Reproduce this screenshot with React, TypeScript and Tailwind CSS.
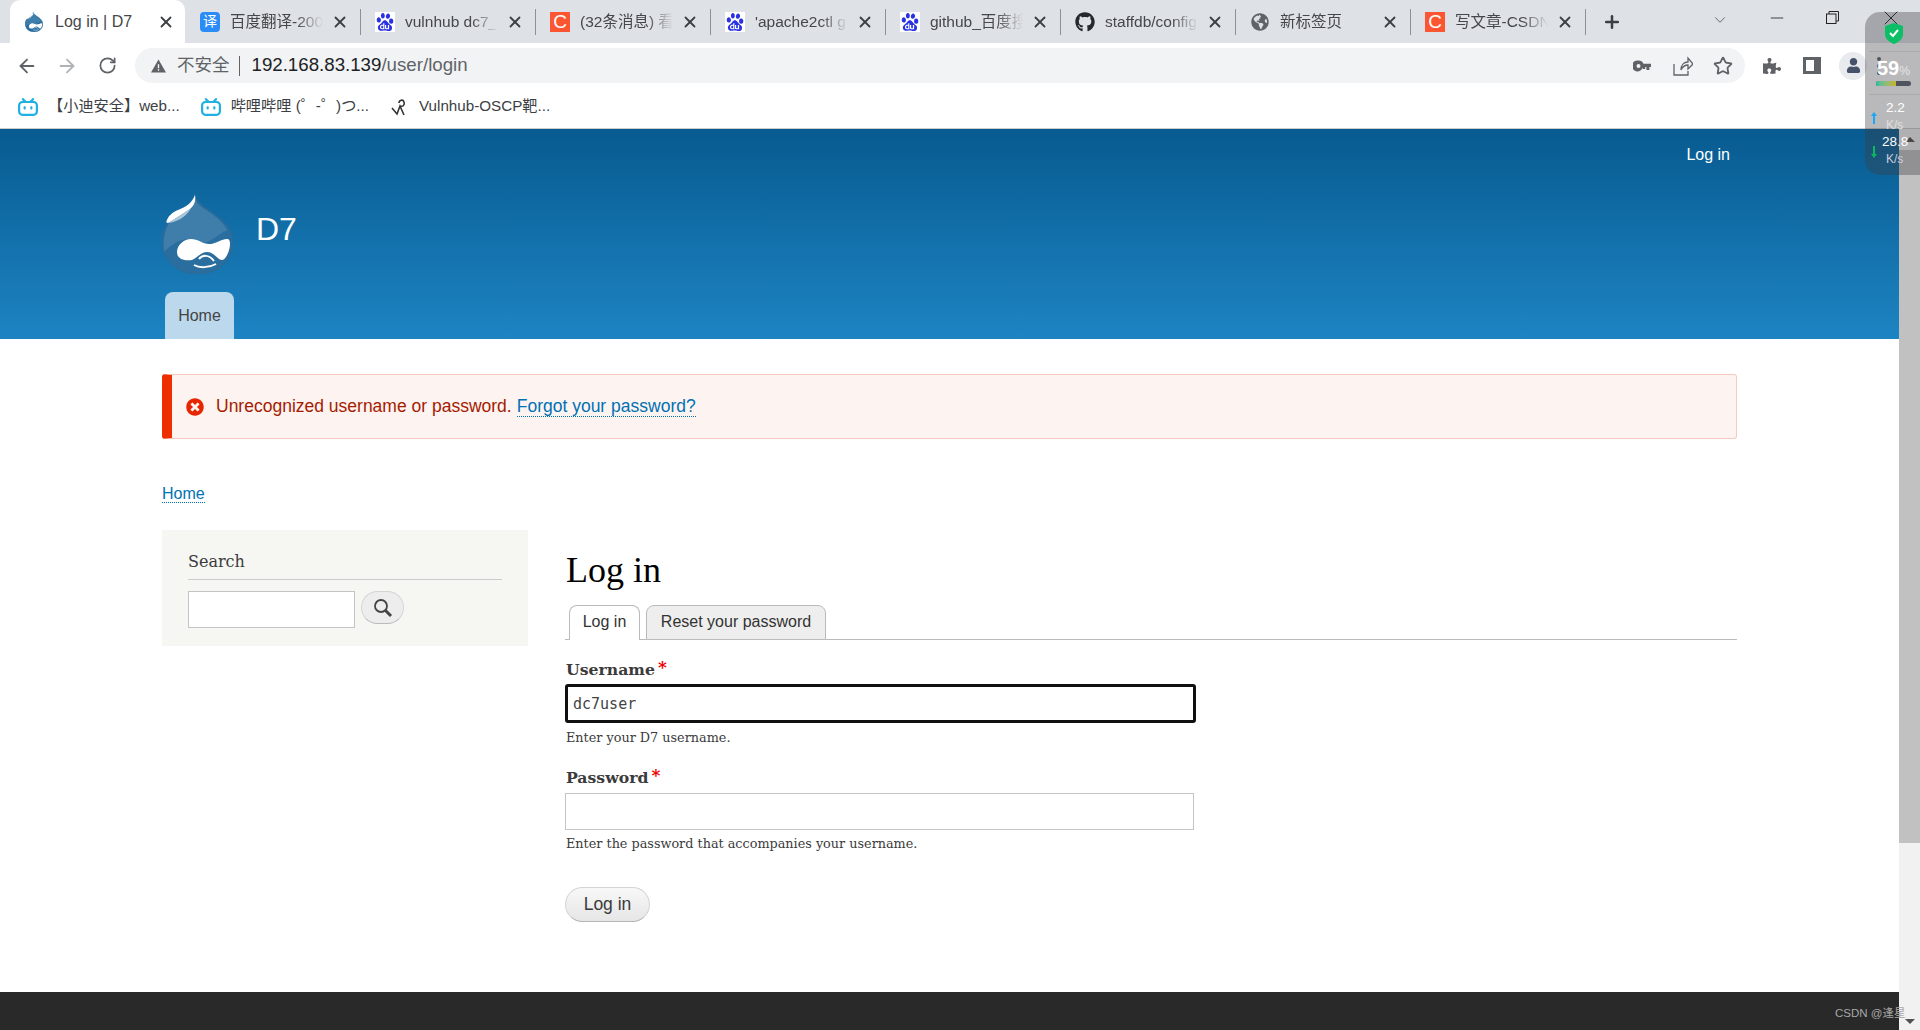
import React from 'react';
import { ArrowLeft, ArrowRight, RotateCw, Star, X, Plus, ChevronDown, Minus } from 'lucide-react';
import { FaGithub, FaGlobeAmericas, FaPuzzlePiece, FaUser, FaTimesCircle } from 'react-icons/fa';
import { SiBaidu, SiBilibili } from 'react-icons/si';

const sans = 'font-["Liberation_Sans","Noto_Sans_CJK_SC",sans-serif]';

const BaiduIcon = () => (
  <span className="flex h-5 w-5 items-center justify-center bg-white text-[#2932e1]">
    <SiBaidu className="h-[18px] w-[18px]" />
  </span>
);

const CsdnIcon = () => (
  <span className="flex h-5 w-5 items-center justify-center bg-[#fc5531] text-[19px] leading-none text-white">C</span>
);

const DrupalDrop = ({ className }: { className: string }) => (
  <svg className={className} viewBox="0 0 71 80">
    <path d="M33 0c1 7 6 11 13 16 13 8 25 17 25 33 0 17-15 31-35 31C15 80 0 66 0 47 0 31 11 22 21 16 27 12 32 8 33 0z" fill="#2a6e9f" stroke="#2d6a94" />
    <path d="M33 3c1 6 5 9 11 13 9 6 17 12 21 20-7 3-12 9-20 12-7 2-11-4-20-3-10 1-18 8-23 13C0 31 11 22 21 16 27 12 32 8 33 3z" fill="#3f7dab" />
    <path d="M33 1c1 7-1 12-8 16-6 4-12 8-19 12-2 0-2-2-1-3 2-5 6-8 11-10 8-3 14-7 17-15z" fill="#fff" />
    <path d="M6 29c7-4 13-8 19-12 2-1 3-2 4-3-3 6-9 11-15 13-3 1-6 2-8 2z" fill="#a9c6da" />
    <path d="M15 58c0-7 7-13 14-13 7 0 12 5 18 5 7 0 14-6 19-5 3 1 2 8 1 11-1 4-4 10-7 10-4 0-8-8-15-8-6 0-10 6-15 8-6 1-15 0-15-8z" fill="#fff" />
    <path d="M37 65c3-4 10-5 15 2M32 71c5 3 15 3 22-1" fill="none" stroke="#fff" strokeWidth="2" />
  </svg>
);

const tabs = [
  { title: '百度翻译-200', icon: <span className="flex h-5 w-5 items-center justify-center rounded-sm bg-[#2b8cf7] text-[14px] text-white">译</span> },
  { title: 'vulnhub dc7_', icon: <BaiduIcon />, sep: true },
  { title: '(32条消息) 看', icon: <CsdnIcon />, sep: true },
  { title: "'apache2ctl g", icon: <BaiduIcon />, sep: true },
  { title: 'github_百度搜', icon: <BaiduIcon />, sep: true },
  { title: 'staffdb/config', icon: <FaGithub className="h-5 w-5 text-[#24292f]" />, sep: true },
  { title: '新标签页', icon: <FaGlobeAmericas className="h-[18px] w-[18px] text-[#5f6368]" />, sep: true },
  { title: '写文章-CSDN', icon: <CsdnIcon />, sep: true },
];

const BrowserChrome = () => (
  <div className={sans}>
    <div className="flex h-[43px] items-end bg-[#dee1e6] pl-[10px]">
      <div className="flex h-[43px] w-[175px] items-center rounded-t-[10px] bg-white pl-[15px] pr-[10px]">
        <DrupalDrop className="h-5 w-[18px]" />
        <span className="ml-[12px] text-[16px] text-[#45474a]">Log in | D7</span>
        <X className="ml-auto h-[18px] w-[18px] text-[#3c4043]" strokeWidth={2.4} />
      </div>
      {tabs.map((tab) => (
        <div key={tab.title} className="flex h-[43px] w-[175px] items-center">
          <span className={tab.sep ? 'h-[26px] w-px bg-[#8e9297]' : 'h-[26px] w-px'} />
          <span className="ml-[14px] flex w-5 justify-center">{tab.icon}</span>
          <span className="ml-[10px] w-[95px] overflow-hidden whitespace-nowrap text-[15.5px] text-[#45474a] [mask-image:linear-gradient(to_right,black_70%,transparent_98%)]">
            {tab.title}
          </span>
          <X className="ml-[6px] h-[18px] w-[18px] text-[#3c4043]" strokeWidth={2.4} />
        </div>
      ))}
      <div className="flex h-[43px] items-center">
        <span className="h-[26px] w-px bg-[#8e9297]" />
        <Plus className="ml-[16px] h-[20px] w-[20px] text-[#3c4043]" strokeWidth={3} />
        <ChevronDown className="ml-[89px] h-[18px] w-[18px] -translate-y-0.5 text-[#3c4043]" strokeWidth={1} />
        <Minus className="ml-[38px] h-5 w-5 -translate-y-1 text-[#222]" strokeWidth={1} />
        <svg className="ml-[39px] h-[13px] w-[13px] -translate-y-1 text-[#222]" viewBox="0 0 13 13" fill="none" stroke="currentColor">
          <path d="M3 3V.5h9.5V10H10" />
          <rect x="0.5" y="3" width="9.5" height="9.5" />
        </svg>
        <X className="ml-[40px] h-6 w-6 -translate-y-1 text-[#222]" strokeWidth={1} />
      </div>
    </div>

    <div className="flex h-[40px] items-end bg-white pl-[7px]">
      <div className="flex h-[35px] items-center">
        <span className="flex w-10 justify-center"><ArrowLeft className="h-[22px] w-[22px] text-[#5f6368]" strokeWidth={2} /></span>
        <span className="flex w-10 justify-center"><ArrowRight className="h-[22px] w-[22px] text-[#b0b3b6]" strokeWidth={2} /></span>
        <span className="flex w-10 justify-center"><RotateCw className="h-[19px] w-[19px] text-[#5f6368]" strokeWidth={2.2} /></span>
      </div>
      <div className="ml-2 flex h-[35px] w-[1610px] items-center rounded-full bg-[#f1f3f4] pl-4 pr-[12px]">
        <svg className="h-[14px] w-[15px] text-[#5f6368]" viewBox="0 0 16 14"><path d="M8 0l8 14H0z" fill="currentColor" /><path d="M7.3 5h1.4v4.5H7.3zM7.3 10.5h1.4V12H7.3z" fill="#fff" /></svg>
        <span className="ml-[11px] text-[17.5px] text-[#5f6368]">不安全</span>
        <span className="ml-[9px] h-[20px] w-px bg-[#5f6368]" />
        <span className="ml-[12px] text-[18.7px] text-[#202124]">192.168.83.139<span className="text-[#5f6368]">/user/login</span></span>
        <svg className="ml-auto h-[12px] w-[18px] text-[#5f6368]" viewBox="0 0 18 12" fill="currentColor">
          <path fillRule="evenodd" d="M5.5 0.5a5.5 5.5 0 0 1 5 3.2H18v3.2h-1.6V10h-3V6.9h-1.2V9h-2.4V7.6a5.5 5.5 0 1 1-4.3-7.1zM5.5 4a2 2 0 1 0 0 4 2 2 0 0 0 0-4z" />
        </svg>
        <svg className="ml-[22px] h-5 w-5 text-[#5f6368]" viewBox="0 0 20 20" fill="none" stroke="currentColor" strokeWidth="1.3">
          <path d="M1 8v11h14v-4M8 14c0-5 3-8 7-8V2l5 6-5 5V9c-3 0-5 1-7 5z" />
        </svg>
        <Star className="ml-[20px] h-5 w-5 text-[#5f6368]" strokeWidth={2.2} />
      </div>
      <div className="ml-[7px] flex h-[35px] items-center text-[#5f6368]">
        <span className="flex w-10 justify-center"><FaPuzzlePiece className="h-[18px] w-[18px]" /></span>
        <span className="flex w-10 justify-center">
          <span className="h-[17px] w-[18px] border-[3px] border-r-[7px] border-[#5f6368] bg-white" />
        </span>
        <span className="ml-[7px] flex h-[28px] w-[28px] items-center justify-center rounded-full bg-[#e8eaed]">
          <FaUser className="h-[15px] w-[15px] text-[#45526a]" />
        </span>
        <span className="ml-[10px] flex flex-col gap-[3px]">
          <span className="h-[4px] w-[4px] rounded-full bg-[#5f6368]" />
          <span className="h-[4px] w-[4px] rounded-full bg-[#5f6368]" />
          <span className="h-[4px] w-[4px] rounded-full bg-[#5f6368]" />
        </span>
      </div>
    </div>

    <div className="flex h-[46px] items-center border-b border-[#ccc] bg-white pl-[18px] pt-0.5 text-[15.2px] text-[#3c4043]">
      <SiBilibili className="h-5 w-5 text-[#20b0e3]" />
      <span className="ml-[10px]">【小迪安全】web...</span>
      <SiBilibili className="ml-[21px] h-5 w-5 text-[#20b0e3]" />
      <span className="ml-[10px]">哔哩哔哩 (゜-゜)つ...</span>
      <svg className="ml-[22px] h-5 w-[18px] text-[#333]" viewBox="0 0 18 20" fill="none" stroke="currentColor" strokeWidth="1.6">
        <path d="M1 11l5 6 3-8 4 9M9 9c3 1 5-1 4-4S8 3 8 6" />
      </svg>
      <span className="ml-[10px]">Vulnhub-OSCP靶...</span>
    </div>
  </div>
);

const Header = () => (
  <header className={`h-[210px] bg-gradient-to-b from-[#075b90] to-[#1d84c3] ${sans}`}>
    <div className="flex h-[65px] justify-end pr-[169px] pt-[14px] text-[16px] leading-6 text-white">Log in</div>
    <div className="flex h-[98px] items-start pl-[162px]">
      <DrupalDrop className="h-[80px] w-[71px]" />
      <span className="ml-[23px] mt-[17px] text-[32px] leading-9 text-white">D7</span>
    </div>
    <div className="pl-[165px]">
      <a className="flex h-[47px] w-[69px] items-start justify-center rounded-t-lg bg-[#bcd8ec] pt-3 text-[16px] leading-6 text-[#444]">Home</a>
    </div>
  </header>
);

const serif = 'font-["DejaVu_Serif",serif]';
const dotted = 'border-b border-dotted border-[#0071b3] text-[#0071b3]';

const Content = () => (
  <main className={`flex-1 pl-[162px] ${sans}`}>
    <div className="mt-[35px] flex h-[65px] w-[1575px] items-center rounded-[3px] border border-[#f9c9bf] border-l-[10px] border-l-[#ed2f00] bg-[#fdf3f1] pl-[14px] text-[17.5px] text-[#a51b00]">
      <span className="relative flex h-[18px] w-[18px] items-center justify-center">
        <FaTimesCircle className="h-[18px] w-[18px] text-[#e62600]" />
      </span>
      <span className="ml-3">Unrecognized username or password.</span>
      <a className={`ml-[5px] leading-5 ${dotted}`}>Forgot your password?</a>
    </div>

    <div className="mt-[43px] h-6 text-[16px] leading-6">
      <a className={dotted}>Home</a>
    </div>

    <div className="mt-[24px] flex items-start">
      <aside className="h-[116px] w-[366px] bg-[#f6f6f2] pl-[26px] pt-[20px]">
        <h2 className={`h-[30px] w-[314px] border-b border-[#ccc] text-[16px] leading-6 text-[#3b3b3b] ${serif}`}>Search</h2>
        <div className="mt-[11px] flex items-start">
          <div className="h-[37px] w-[167px] border border-[#c4c4c4] bg-white" />
          <button className="ml-[6px] flex h-[33px] w-[43px] items-center justify-center rounded-full border border-[#d4d4d4] border-b-[#bbb] bg-[#ededed]">
            <svg className="h-5 w-5 text-[#444]" viewBox="0 0 20 20" fill="none" stroke="currentColor">
              <circle cx="8" cy="8" r="6" strokeWidth="1.8" />
              <path d="M12.5 12.5l5.5 5.5" strokeWidth="3" />
            </svg>
          </button>
        </div>
      </aside>

      <section className="ml-[38px] w-[1171px]">
        <h1 className='mt-[18px] h-[44px] font-["Liberation_Serif",serif] text-[36px] leading-[44px] text-black'>Log in</h1>
        <div className="-ml-px mt-[13px] flex h-[35px] items-end border-b border-[#bbb] pl-1">
          <a className="relative top-px flex h-[35px] w-[71px] items-center justify-center rounded-t-lg border border-b-0 border-[#bbb] bg-white pb-0.5 text-[16px] text-[#333]">Log in</a>
          <a className="relative top-px ml-[6px] flex h-[35px] w-[180px] items-center justify-center rounded-t-lg border border-[#bbb] bg-[#eee] pb-0.5 text-[16px] text-[#333]">Reset your password</a>
        </div>

        <label className={`mt-[17px] block h-6 text-[15.7px] font-bold leading-6 text-[#3b3b3b] ${serif}`}>
          Username<span className="relative top-[-2px] ml-[3px] text-[17px] text-[#ee0000]">*</span>
        </label>
        <div className="-ml-px mt-[3px] flex h-[39px] w-[631px] items-center rounded-[3px] border-[3px] border-[#101010] bg-white pl-[5px] pt-0.5 font-['DejaVu_Sans_Mono',monospace] text-[15px] text-[#444]">dc7user</div>
        <p className={`mt-[5px] h-5 text-[12.8px] leading-5 text-[#3b3b3b] ${serif}`}>Enter your D7 username.</p>

        <label className={`mt-[17px] block h-6 text-[15.7px] font-bold leading-6 text-[#3b3b3b] ${serif}`}>
          Password<span className="relative top-[-2px] ml-[3px] text-[17px] text-[#ee0000]">*</span>
        </label>
        <div className="-ml-px mt-1 h-[37px] w-[629px] border border-[#c4c4c4] bg-white" />
        <p className={`mt-1 h-5 text-[12.8px] leading-5 text-[#3b3b3b] ${serif}`}>Enter the password that accompanies your username.</p>

        <button className="-ml-px mt-[33px] h-[35px] w-[85px] rounded-full border border-[#d4d4d4] border-b-[#b4b4b4] bg-gradient-to-b from-[#f8f8f8] to-[#e6e6e6] text-[17.5px] text-[#3a3a3a]">Log in</button>
      </section>
    </div>
  </main>
);

const Scrollbar = () => (
  <div className="flex w-[21px] flex-col items-center bg-[#f1f1f1]">
    <span className="mt-[8px] h-0 w-0 border-x-[5px] border-b-[5px] border-x-transparent border-b-[#505050]" />
    <div className="mt-[8px] h-[693px] w-full bg-[#c1c1c1]" />
    <span className="mb-[6px] mt-auto h-0 w-0 border-x-[5px] border-t-[5px] border-x-transparent border-t-[#505050]" />
  </div>
);

const MonitorWidget = () => (
  <div className={`absolute right-0 top-[12px] h-[163px] w-[55px] rounded-l-[15px] bg-[rgba(60,62,66,0.36)] text-white ${sans}`}>
    <svg className="absolute left-[20px] top-[11px] h-[21px] w-[18px]" viewBox="0 0 18 21">
      <path d="M9 0l9 3v8c0 5-4 8-9 10-5-2-9-5-9-10V3z" fill="#0cbf66" />
      <path d="M5 10l3 3 5-6" fill="none" stroke="#fff" strokeWidth="2" />
    </svg>
    <div className="absolute left-[4px] right-0 top-[39px] h-px bg-[#aaa]" />
    <div className="absolute left-[12px] top-[44px] text-[20px] font-bold leading-6">59<span className="text-[12px] font-normal text-[#e4e4e4]">%</span></div>
    <div className="absolute left-[11px] top-[69px] flex h-[5px] w-[35px] overflow-hidden rounded-full bg-[#50545e]">
      <span className="h-full w-[20px] bg-gradient-to-r from-[#22bfa5] to-[#c9b422]" />
    </div>
    <div className="absolute left-[4px] right-0 top-[82px] h-px bg-[#aaa]" />
    <div className="absolute left-[21px] top-[88px] text-[13.5px] leading-4">2.2</div>
    <div className="absolute left-[21px] top-[105px] text-[12px] leading-4 text-[#e0e0e0]">K/s</div>
    <svg className="absolute left-[6px] top-[100px] h-[12px] w-[6px] text-[#1aa7f5]" viewBox="0 0 6 12" fill="currentColor"><path d="M3 0l3 4H4v8H2V4H0z" /></svg>
    <div className="absolute left-[17px] top-[122px] text-[13.5px] leading-4">28.8</div>
    <div className="absolute left-[21px] top-[139px] text-[12px] leading-4 text-[#ccd]">K/s</div>
    <svg className="absolute left-[6px] top-[134px] h-[12px] w-[6px] text-[#0bb85c]" viewBox="0 0 6 12" fill="currentColor"><path d="M3 12l3-4H4V0H2v8H0z" /></svg>
  </div>
);

export default function App() {
  return (
    <div className="relative flex h-[1030px] w-[1920px] flex-col overflow-hidden bg-white">
      <BrowserChrome />
      <div className="flex flex-1">
        <div className="flex w-[1899px] flex-col">
          <Header />
          <Content />
          <footer className="h-[38px] bg-[#292929]" />
        </div>
        <Scrollbar />
      </div>
      <MonitorWidget />
      <span className={`absolute bottom-[9px] left-[1835px] text-[11.5px] leading-4 text-[#a8a8a8] ${sans}`}>CSDN @逢星</span>
    </div>
  );
}
